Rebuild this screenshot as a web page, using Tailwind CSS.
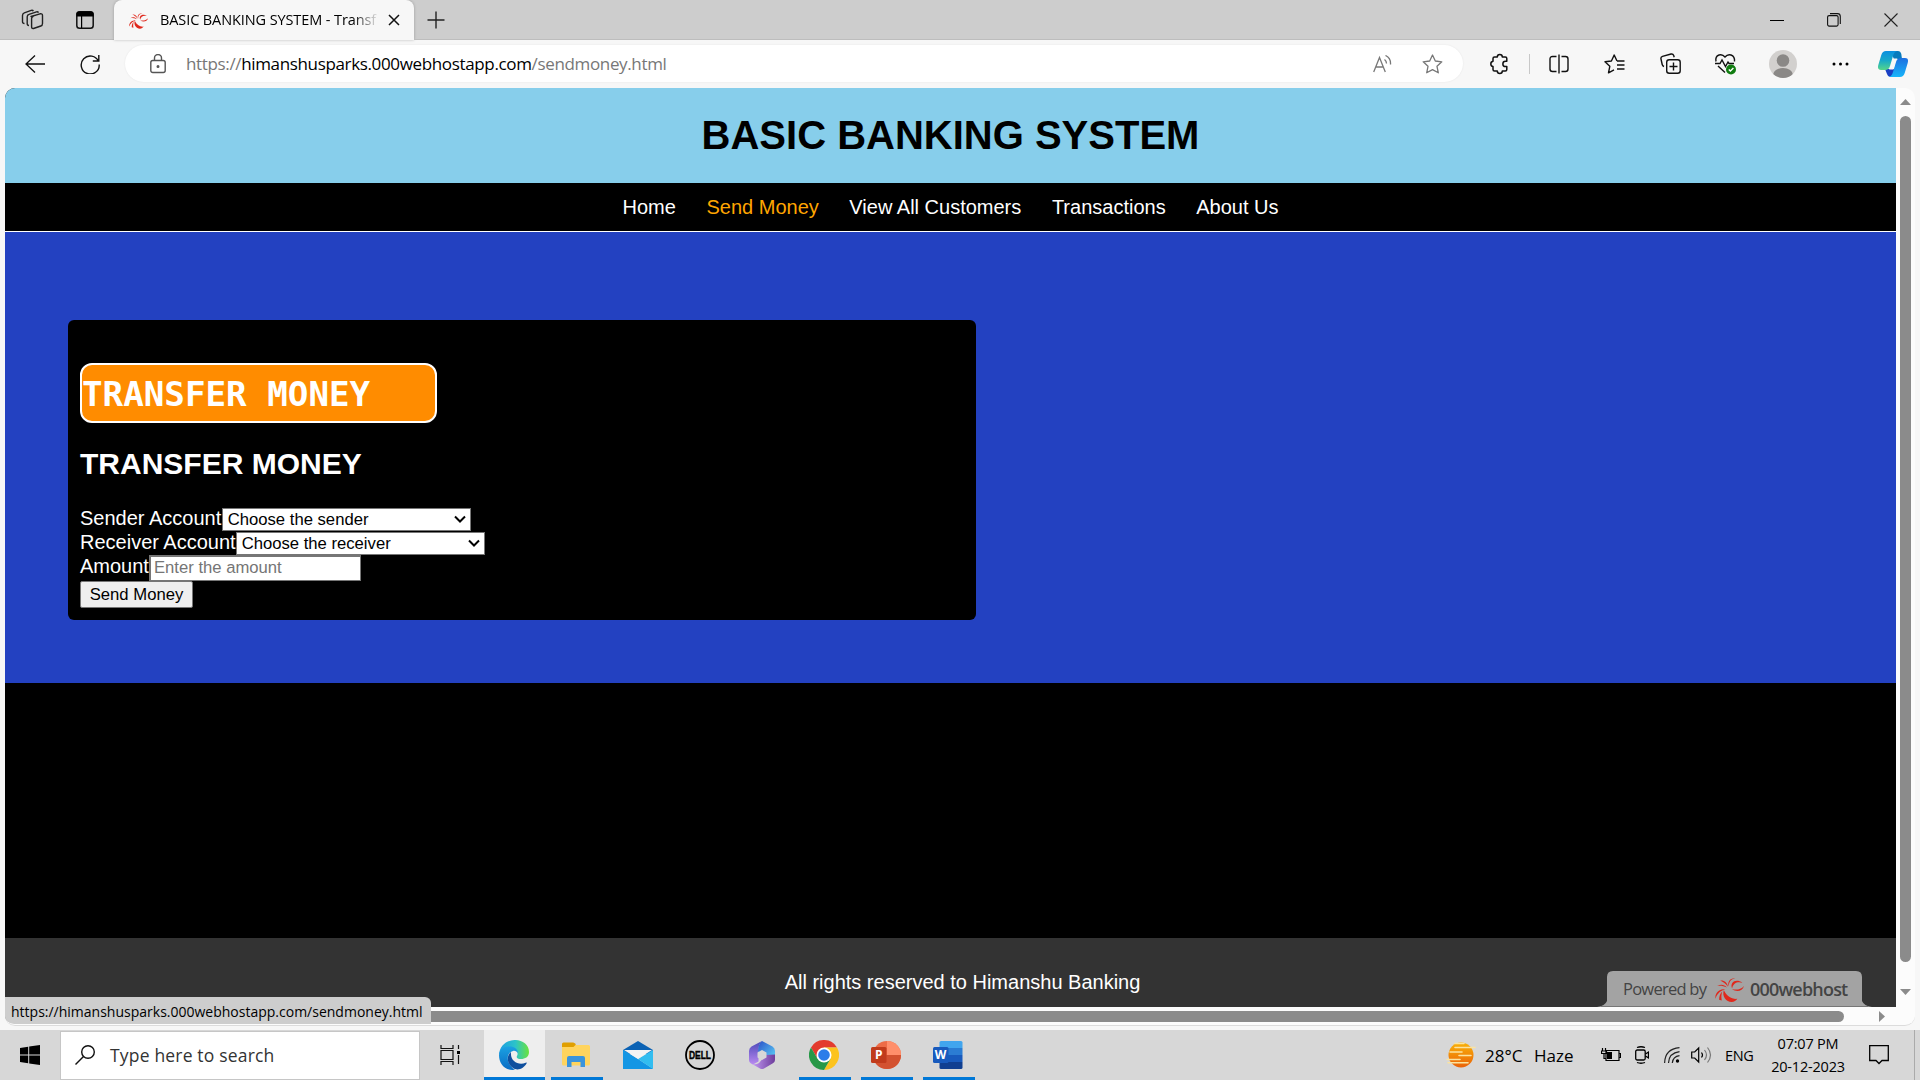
<!DOCTYPE html>
<html lang="en">
<head>
<meta charset="utf-8">
<title>BASIC BANKING SYSTEM - Transfer Money</title>
<script src="https://cdn.jsdelivr.net/npm/@tailwindcss/browser@4"></script>
</head>
<body class="w-[1920px] h-[1080px] overflow-hidden bg-[#f7f7f7] flex flex-col font-['Open_Sans',sans-serif] text-black">

<svg class="hidden">
  <symbol id="swirl" viewBox="0 0 28 24">
    <g fill="#e0281c">
      <path d="M28 8.500c-1.500 5-7 6.500-11.500 3 4 1.200 8.500.5 11.500-3z"/>
      <path d="M26.500 5.500c-4.500-1.500-9 0-10 5.500C14 5.500 20 1 26.500 5.500z"/>
      <path d="M19.500 1.200c-4 .8-6.500 3.800-6 8-2-4 1-8.500 6-8z"/>
      <path d="M5 3.300c4-.5 7 2 7.500 6C10.500 6.300 8 4.800 5 3.300z"/>
      <path d="M2 8.500c3.500-2 7-1.500 9.500 1.500-3.500-1.500-6-2-9.500-1.500z"/>
      <path d="M.5 21c-1-5.500 3.500-9.500 9.500-9.500-4 1.500-8 4-9.500 9.500z"/>
      <path d="M8.500 12.500C6.500 19 11 24 16 24c2.500 0 4.500-1.200 5.500-3C16 21.500 11 18.500 8.500 12.500z"/>
      <path d="M4 22c0-3 .8-6 3-8-1 3-1 5.500-.5 8.500z"/>
    </g>
  </symbol>
</svg>

<!-- Tab strip -->
<div class="h-10 shrink-0 bg-[#cdcdcd] flex items-stretch">
  <div class="w-[114px] flex items-center border-b border-[#bdbdbd]">
    <svg class="ml-[21px] w-[23px] h-[22px]" viewBox="0 0 23 22" fill="none" stroke="#222" stroke-width="1.4" stroke-linejoin="round"><path d="M10 7.500 19 4.800q2.500-.5 2.500 1.700v8q0 2-1.700 2.500l-7.300 2.500q-1.900.4-1.900-1.700V9.500q0-1.500 1.400-2zM8 16.500q-1.800 0-1.800-2V7.800q0-2 1.800-2.500l7.500-2.500q1.400-.4 2 .8M3.500 14.500q-2 0-2-2v-6q0-2 1.800-2.700l6.900-2.400q1.500-.4 2.200.7"/></svg>
    <svg class="ml-8 w-[18px] h-[18px]" viewBox="0 0 18 18"><rect x=".8" y=".8" width="16.400" height="16.400" rx="2.800" fill="none" stroke="#111" stroke-width="1.500"/><path d="M.5 5.500V3Q.5.500 3 .5h12q2.500 0 2.500 2.500v2.500zM5 5h1.200v12H5z"/></svg>
  </div>
  <div class="w-[300px] bg-[#f7f7f7] rounded-t-lg flex items-center shadow-[0_0_3px_rgba(0,0,0,0.25)]">
    <svg class="ml-[15px] w-[19px] h-[17px]"><use href="#swirl"/></svg>
    <div class="ml-[12px] w-[219px] text-[14.5px] tracking-[-0.1px] whitespace-nowrap mask-r-from-88% mask-r-to-100%">BASIC BANKING SYSTEM - Transf</div>
    <svg class="ml-[9px] w-[12px] h-[12px]" viewBox="0 0 12 12" stroke="#111" stroke-width="1.500"><path d="M1 1l10 10M11 1 1 11"/></svg>
  </div>
  <div class="flex-1 flex items-center border-b border-[#bdbdbd]">
    <svg class="ml-[13px] w-[18px] h-[18px]" viewBox="0 0 18 18" stroke="#222" stroke-width="1.400"><path d="M9 .5v17M.5 9h17"/></svg>
    <svg class="ml-auto w-[14px] h-[14px]" viewBox="0 0 14 14" stroke="#000"><path d="M0 7.500h14"/></svg>
    <svg class="ml-[43px] w-[14px] h-[14px]" viewBox="0 0 14 14" fill="none" stroke="#111" stroke-width="1.100"><rect x=".6" y="2.600" width="10.500" height="10.500" rx="1.500"/><path d="M3 .6h7.500q2.800 0 2.800 2.800V11"/></svg>
    <svg class="ml-[43px] mr-[22px] w-[14px] h-[14px]" viewBox="0 0 14 14" stroke="#222" stroke-width="1.100"><path d="M.5.500l13 13M13.500.500l-13 13"/></svg>
  </div>
</div>

<!-- Toolbar -->
<div class="h-12 shrink-0 flex items-center pb-px">
  <svg class="ml-[25px] w-[20px] h-[18px]" viewBox="0 0 20 18" fill="none" stroke="#111" stroke-width="1.300"><path d="M10 .5 1 9l9 8.500M1 9h19"/></svg>
  <svg class="ml-[35px] w-[20px] h-[20px]" viewBox="0 0 20 20" fill="none" stroke="#111" stroke-width="1.400"><path d="M18.500 7.500A9 9 0 1 0 19.200 10.500M18.800 1v6h-6"/></svg>
  <div class="ml-[25px] w-[1338px] h-[37px] bg-white rounded-full flex items-center shadow-[0_0_2px_rgba(0,0,0,0.08)]">
    <svg class="ml-[25px] w-[16px] h-[20px]" viewBox="0 0 16 20" fill="none" stroke="#555" stroke-width="1.400"><rect x=".8" y="6.500" width="14.400" height="12" rx="2"/><path d="M4.500 6.500V4a3.500 3.500 0 0 1 7 0v2.500"/><circle cx="8" cy="12.500" r=".8" fill="#555"/></svg>
    <div class="ml-[20px] text-[17px] tracking-[-0.35px] whitespace-nowrap text-[#777]">https://<span class="text-black">himanshusparks.000webhostapp.com</span>/sendmoney.html</div>
    <svg class="ml-auto w-[19px] h-[18px]" viewBox="0 0 19 18" fill="none" stroke="#777" stroke-width="1.300"><path d="M.7 17 6.500 2.500 12.300 17M2.800 12h7.400M11.500 4.500q2 1.500 2 4M12.500.500Q18 3 17.500 9.500"/></svg>
    <svg class="ml-[30px] mr-[20px] w-[21px] h-[20px]" viewBox="0 0 21 20" fill="none" stroke="#777" stroke-width="1.300" stroke-linejoin="round"><path d="m10.500 1 2.800 6 6.500.8-4.800 4.500 1.300 6.500-5.800-3.200-5.800 3.200L6 12.300 1.200 7.800 7.700 7z"/></svg>
  </div>
  <svg class="ml-[26px] w-[20px] h-[22px]" viewBox="0 0 20 22" fill="none" stroke="#111" stroke-width="1.500" stroke-linejoin="round"><path d="M5.500 4h2.800a2.500 2.500 0 0 1 5 0h3q1.500 0 1.500 1.500v2.800h-1.300a2.600 2.600 0 0 0 0 5.300h1.300v3q0 1.500-1.500 1.500h-3a2.500 2.500 0 0 1-5 0H5.500Q4 18.100 4 16.600v-3a2.700 2.700 0 0 1 0-5.300V5.500Q4 4 5.500 4z"/></svg>
  <div class="ml-[20px] w-px h-5 bg-[#c8c8c8]"></div>
  <svg class="ml-[19px] w-[20px] h-[20px]" viewBox="0 0 20 20" fill="none" stroke="#111" stroke-width="1.400"><path d="M7.500 2.500H3.500Q1 2.500 1 5v10q0 2.500 2.500 2.500h4M12.500 2.500h4Q19 2.500 19 5v10q0 2.500-2.500 2.500h-4M10 .5v19"/></svg>
  <svg class="ml-[35px] w-[21px] h-[20px]" viewBox="0 0 21 20" fill="none" stroke="#111" stroke-width="1.400" stroke-linejoin="round"><path d="M13 7 10.200 1 7.400 7 1 7.800l4.800 4.500-1.300 6.500L10 15.800M13 7h7.500M13 11h7.500M13 15h7.500"/></svg>
  <svg class="ml-[35px] w-[21px] h-[21px]" viewBox="0 0 21 21" fill="none" stroke="#111" stroke-width="1.400"><rect x="6.700" y="6.700" width="13.500" height="13.500" rx="2.500"/><path d="M13.500 9.500v8M9.500 13.500h8M4 13.500Q2.500 13 2.200 11.500L1 6q-.5-2 1.500-2.700L11 1q2-.4 2.700 1.500l.5 1.700"/></svg>
  <svg class="ml-[33px] w-[23px] h-[22px]" viewBox="0 0 23 22" fill="none" stroke="#111" stroke-width="1.400"><path d="M2 8.500Q1 3.500 5 2q3.500-1 6 2 2.500-3 6-2 4 1.500 3.500 6.500M1 10.500h5l2-3.500 3.500 6.500 2.500-4.500 1 1.500h5M4 13l7 6.500"/><circle cx="17" cy="16.500" r="5" fill="#107c10" stroke="none"/><path d="m14.800 16.500 1.600 1.600 3-3" stroke="#fff"/></svg>
  <svg class="ml-[32px] w-[28px] h-[28px]" viewBox="0 0 28 28"><defs><clipPath id="av"><circle cx="14" cy="14" r="14"/></clipPath></defs><g clip-path="url(#av)"><path fill="#d2d0ce" d="M0 0h28v28H0z"/><circle cx="14" cy="10.500" r="6.300" fill="#8a8886"/><ellipse cx="14" cy="25" rx="10" ry="7" fill="#8a8886"/></g></svg>
  <svg class="ml-[35px] w-[17px] h-[4px]" viewBox="0 0 17 4"><circle cx="2" cy="2" r="1.500"/><circle cx="8.500" cy="2" r="1.500"/><circle cx="15" cy="2" r="1.500"/></svg>
  <svg class="ml-[29px] w-[30px] h-[28px]" viewBox="0 0 30 28"><defs><linearGradient id="c1" x1="0" y1="0" x2="0" y2="1"><stop stop-color="#0a8fe0"/><stop offset=".5" stop-color="#18a9c9"/><stop offset="1" stop-color="#55d68a"/></linearGradient><linearGradient id="c2" x1="0" y1="0" x2="0" y2="1"><stop stop-color="#1d6fe0"/><stop offset="1" stop-color="#18b5fa"/></linearGradient></defs><path fill="#1a3fc4" d="M7 19h9l2 8h-5q-3 0-4-3z"/><path fill="#087bbd" d="M12 1h8q2.500 0 3.300 3L24 9h-8z"/><path fill="url(#c1)" d="M8 1h11q-3 1-4 5l-3 10q-1 4-5 4H3q-4 0-2.700-5l3-10Q4.500 1 8 1z"/><path fill="url(#c2)" d="M22 27H11q3-1 4-5l3-10q1-4 5-4h4q4 0 2.700 5l-3 10q-1.200 4-4.700 4z"/><path fill="#f7f7f7" d="M15.500 8.500h4q-1.500 1-2 3.500l-2.200 7.500H11q1.500-1 2.200-3.500z"/></svg>
</div>

<!-- Page viewport -->
<div class="relative ml-[5px] w-[1910px] h-[938px] shrink-0 bg-[#fcfcfc] rounded-[10px] overflow-hidden border-b border-[#dcdcdc] flex flex-col">
  <div class="h-[919px] flex">
    <div class="relative w-[1891px] bg-black flex flex-col font-['Liberation_Sans',Arial,sans-serif] text-[20px] text-white">
      <header class="h-[95px] bg-[#87ceeb] flex items-center justify-center pb-0.5">
        <h1 class="text-black text-[40px] font-bold leading-none">BASIC BANKING SYSTEM</h1>
      </header>
      <nav class="h-[49px] border-b border-white flex items-center justify-center gap-[30.6px]">
        <a>Home</a><a class="text-[#ffa500]">Send Money</a><a>View All Customers</a><a>Transactions</a><a>About Us</a>
      </nav>
      <main class="h-[451px] bg-[#2341c1] pt-[88px] pl-[63px]">
        <section class="w-[908px] h-[300px] bg-black rounded-md pl-3 pt-[43px]">
          <div class="w-[357px] h-[60px] rounded-xl border-2 border-white bg-[#ff8c00] flex items-center font-['DejaVu_Sans_Mono',monospace] font-bold text-[34.2px] leading-none whitespace-pre pt-[3px]">TRANSFER MONEY</div>
          <h2 class="mt-[26px] text-[30px] leading-[30px] font-bold">TRANSFER MONEY</h2>
          <div class="mt-[28px] h-6 flex items-center"><label class="leading-[22px] pb-0.5">Sender Account</label>
            <div class="w-[249px] h-[23px] ml-[0.5px] bg-white border border-[#767676] flex items-center justify-between pl-[5px] pr-[4px] text-black text-[16.67px]"><span class="pt-px">Choose the sender</span><svg class="w-[12px] h-[8px]" viewBox="0 0 12 8" fill="none" stroke="#000" stroke-width="2"><path d="m1 1.500 5 5 5-5"/></svg></div></div>
          <div class="h-6 flex items-center"><label class="leading-[22px] pb-0.5">Receiver Account</label>
            <div class="w-[249px] h-[23px] bg-white border border-[#767676] flex items-center justify-between pl-[5px] pr-[4px] text-black text-[16.67px]"><span class="pt-px">Choose the receiver</span><svg class="w-[12px] h-[8px]" viewBox="0 0 12 8" fill="none" stroke="#000" stroke-width="2"><path d="m1 1.500 5 5 5-5"/></svg></div></div>
          <div class="h-[26px] flex items-start"><label class="leading-[22px]">Amount</label>
            <div class="w-[212px] h-[26px] bg-white border-2 border-[#767676] border-r border-b flex items-center pl-[3px] pb-0.5 text-[#757575] text-[16.67px]">Enter the amount</div></div>
          <div class="w-[113px] h-[27px] bg-[#efefef] border border-[#767676] rounded-xs flex items-center justify-center text-black text-[16.67px]">Send Money</div>
        </section>
      </main>
      <div class="h-[255px]"></div>
      <footer class="flex-1 bg-[#333] pt-[33px] pl-[24px] text-center leading-[23px]">All rights reserved to Himanshu Banking</footer>
      <div class="absolute right-[24px] bottom-0 w-[275px] h-[36px] flex items-center text-[#444] font-['Open_Sans',sans-serif]">
        <svg class="absolute inset-0 w-[275px] h-[36px]" viewBox="0 0 275 36"><path fill="#a3a3a3" d="M0 36q8-1 10-6V6q0-6 6-6h243q6 0 6 6v24q2 5 10 6z"/><path fill="#777" d="M4 35h267v1H4z"/></svg>
        <span class="relative ml-[26px] w-[84px] text-[16.5px] tracking-[-0.75px] whitespace-nowrap">Powered by</span>
        <svg class="relative ml-[8px] w-[29px] h-[25px]"><use href="#swirl"/></svg>
        <span class="relative ml-[6px] text-[18px] tracking-[-0.8px] font-semibold">000webhost</span>
      </div>
    </div>
    <div class="flex-1 flex flex-col items-center">
      <svg class="mt-[11px] w-[11px] h-[6px]" viewBox="0 0 11 6"><path fill="#8b8b8b" d="M5.500 0 11 6H0z"/></svg>
      <div class="mt-[11px] w-[11px] h-[846px] rounded-full bg-[#8b8b8b]"></div>
      <svg class="mt-[27px] w-[11px] h-[6px]" viewBox="0 0 11 6"><path fill="#8b8b8b" d="M5.500 6 11 0H0z"/></svg>
    </div>
  </div>
  <div class="flex-1 flex items-center">
    <div class="w-[1839px] h-[11px] bg-[#8b8b8b] rounded-full"></div>
    <svg class="ml-[35px] w-[6px] h-[11px]" viewBox="0 0 6 11"><path fill="#8b8b8b" d="M6 5.500 0 11V0z"/></svg>
  </div>
  <div class="absolute -left-px bottom-[1px] w-[427px] h-[27px] bg-[#cdcdcd] rounded-tr-md rounded-bl-[10px] flex items-center pt-px pl-[7px] text-[14px] whitespace-nowrap">https://himanshusparks.000webhostapp.com/sendmoney.html</div>
</div>
<div class="h-[4px] shrink-0"></div>

<!-- Taskbar -->
<div class="h-[50px] shrink-0 bg-[#d7d7d7] flex items-center">
  <svg class="ml-5 w-5 h-5" viewBox="0 0 20 20"><path d="M0 3l8.200-1.200v7.700H0zM9.200 1.600 20 0v9.500H9.200zM0 10.500h8.200v7.700L0 17zM9.200 10.500H20V20L9.200 18.400z"/></svg>
  <div class="ml-[20px] w-[360px] h-[49px] bg-white border border-[#c6c6c6] flex items-center">
    <svg class="ml-[14px] w-[20px] h-[20px]" viewBox="0 0 20 20" fill="none" stroke="#111" stroke-width="1.400"><circle cx="13" cy="7" r="6.300"/><path d="M8.500 11.500.5 19.500"/></svg>
    <span class="ml-[15px] text-[17.5px] tracking-[0.18px] text-[#333]">Type here to search</span>
  </div>
  <div class="w-[64px] flex justify-center pr-[3px]">
    <svg class="w-[21px] h-[20px]" viewBox="0 0 21 20" fill="none" stroke="#111" stroke-width="1.200"><path d="M1 0v3.500h12V0M1 5.500h12v9H1zM1 20v-3.500h12V20M18.500 0v4M18.500 10v9"/><path fill="#000" stroke="none" d="M17 6h3v3h-3z"/></svg>
  </div>
  <div class="grid grid-cols-[repeat(8,62px)] h-full">
    <div class="w-[61px] bg-[#eee] border-b-[3px] border-[#0078d7] flex items-center justify-center pt-[3px] pr-px">
      <svg class="w-[30px] h-[30px]" viewBox="0 0 30 30"><defs><linearGradient id="e1"><stop stop-color="#1b9de2"/><stop offset=".55" stop-color="#2cc3c9"/><stop offset="1" stop-color="#6be33c"/></linearGradient><linearGradient id="e2" x1="0" y1="0" x2="0" y2="1"><stop stop-color="#1ba1e2"/><stop offset="1" stop-color="#0a6cc4"/></linearGradient></defs><path fill="url(#e1)" d="M0 15C1-5 30-4 30 12c0 5-4 7-8 7-3.500 0-5-1.500-4-3 2-4-1-7-6-7-6 0-10 2-12 6z"/><path fill="url(#e2)" d="M0 15C1 8 6 6.500 11 6.500c4 0 8 2.500 8 7-1-2-3-3-5-2.500-4 1-6 5-5 9.500 1 4 4 7.500 7 9.300C5 31 0 23 0 15z"/><path fill="#0f4f9e" d="M12 12c-5 4-4 12 2 16 5 3.500 11 0 13.500-4.500.5-.8 0-1.200-.8-.8C20 25.500 11 22 12 12z"/></svg>
    </div>
    <div class="mx-[5px] border-b-[3px] border-[#0078d7] flex items-center justify-center pt-[3px] pr-[2px]">
      <svg class="w-[28px] h-[26px]" viewBox="0 0 28 26"><path fill="#e09f00" d="M0 2q0-1.500 1.500-1.500H11q1 0 1.700.8L14 3v4H0z"/><path fill="#ffd45e" d="M0 5h11.500l2-2H26.500Q28 3 28 4.500V22q0 1.500-1.500 1.500h-25Q0 23.500 0 22z"/><path fill="#3a94dc" d="M5 25V16q0-2 2-2h14q2 0 2 2v9h-4.500v-5h-9v5z"/></svg>
    </div>
    <div class="flex items-center justify-center pr-[2px]"><svg class="w-[30px] h-[28px]" viewBox="0 0 30 28"><path fill="#0b62b4" d="M0 9 15 0l15 9v4H0z"/><path fill="#1496e4" d="M0 9v19h30z"/><path fill="#1496e4" d="M0 9v19h30L15 18z"/><path fill="#32bdf0" d="M30 9v19L15 18z"/><path fill="#f4f4f4" d="M1 9h28L15 18z"/></svg></div>
    <div class="flex items-center justify-center pr-[2px]"><svg class="w-[30px] h-[30px]" viewBox="0 0 30 30"><circle cx="15" cy="15" r="14" fill="none" stroke="#000" stroke-width="1.800"/><text x="4" y="18.800" font-family="Liberation Sans" font-weight="bold" font-size="10.500" textLength="22" lengthAdjust="spacingAndGlyphs" stroke="#000" stroke-width=".4">DELL</text></svg></div>
    <div class="flex items-center justify-center pr-[2px]"><svg class="w-[26px] h-[28px]" viewBox="0 0 26 28"><defs><linearGradient id="m1" x1="0" y1="0" x2="0" y2="1"><stop stop-color="#4a47b8"/><stop offset="1" stop-color="#b98af0"/></linearGradient><linearGradient id="m2" x1="0" y1="0" x2="1" y2="1"><stop stop-color="#2b52c8"/><stop offset="1" stop-color="#5fd5fa"/></linearGradient><linearGradient id="m3"><stop stop-color="#c49af5"/><stop offset="1" stop-color="#6d3d9c"/></linearGradient></defs><path fill="url(#m1)" d="M13 0 2.500 5.500Q0 7 0 10v9q0 2.500 2 3.500l2 1 5.500-3V9q0-6 3.500-9z"/><path fill="url(#m2)" d="m13 0 10.500 5.500Q26 7 26 10v8.500L17 14l-8-3.500Q9 3 13 0z"/><path fill="url(#m3)" d="M17 14l9-.5V19q0 2.500-2.500 3.500L15 27.500q-2 1-4 0l-8-4.500q4 1 7-1z"/><path fill="#d7d7d7" d="m13 9 4.500 2.500v5L13 19l-4.500-2.500v-5z"/></svg></div>
    <div class="mx-[5px] border-b-[3px] border-[#0078d7] flex items-center justify-center pt-[3px] pr-[2px]">
      <svg class="w-[30px] h-[30px]" viewBox="0 0 30 30"><path fill="#e33b2e" d="M2 7.500a15 15 0 0 1 26 0H15v7.500L8.500 18.800z"/><path fill="#fcc31e" d="M28 7.500A15 15 0 0 1 15 30l6.500-11.200L15 7.500z"/><path fill="#279847" d="M2 7.500A15 15 0 0 0 15 30l6.500-11.200L15 15l-6.500 3.800z"/><circle cx="15" cy="15" r="7.500" fill="#fff"/><circle cx="15" cy="15" r="5.800" fill="#2b7de9"/></svg>
    </div>
    <div class="mx-[5px] border-b-[3px] border-[#0078d7] flex items-center justify-center pt-[3px] pr-[2px]">
      <svg class="w-[30px] h-[28px]" viewBox="0 0 30 28"><circle cx="16" cy="14" r="14" fill="#ed6c47"/><path fill="#ff8f6b" d="M16 0a14 14 0 0 1 14 14H16z"/><path fill="#d35230" d="M2 14h28a14 14 0 0 1-28 0z"/><rect y="6" width="15.500" height="16" rx="1.500" fill="#c13b1b"/><text x="4" y="18.300" font-family="Open Sans" font-weight="bold" font-size="12" fill="#fff">P</text></svg>
    </div>
    <div class="mx-[5px] border-b-[3px] border-[#0078d7] flex items-center justify-center pt-[3px] pr-[2px]">
      <svg class="w-[30px] h-[28px]" viewBox="0 0 30 28"><path fill="#41a5ee" d="M8 0h20q1.500 0 1.500 1.500V7h-23V1.500Q6.500 0 8 0z"/><path fill="#2b7cd3" d="M6.500 7h23v7h-23z"/><path fill="#185abd" d="M6.500 14h23v7h-23z"/><path fill="#103f91" d="M6.500 21h23v5.500q0 1.500-1.500 1.500H8q-1.500 0-1.500-1.500z"/><rect y="6" width="15.500" height="16" rx="1.500" fill="#185abd"/><text x="1.800" y="18.300" font-family="Open Sans" font-weight="bold" font-size="12" fill="#fff">W</text></svg>
    </div>
  </div>
  <div class="ml-auto flex items-center">
    <svg class="w-[30px] h-[26px]" viewBox="0 0 30 26"><defs><linearGradient id="s" x1="0" y1="0" x2="0" y2="1"><stop stop-color="#f9b208"/><stop offset="1" stop-color="#ea6208"/></linearGradient></defs><circle cx="15" cy="13" r="12.500" fill="url(#s)"/><path d="M9 1.500h9M9 5.500h20M4 10h12M13 13.500h12M1 17.500h13M2 20.800h20" stroke="#fbe3a0" stroke-width="1.600" stroke-linecap="round"/></svg>
    <span class="ml-[9px] w-[49px] pt-px text-[17px]">28°C</span>
    <span class="w-[67px] pt-px text-[17px]">Haze</span>
    <svg class="w-[20px] h-[14px]" viewBox="0 0 20 14" fill="none" stroke="#000" stroke-width="1.200"><path d="M5 2.500h13v10H5zM18.500 5.500h1v4h-1M1.500 0v2.500M4.500 0v2.500M.5 3h5v2.500h-5zM3 5v5.500h2"/><path d="M6 4h5v7H6z" fill="#000" stroke="none"/></svg>
    <svg class="ml-[14px] w-[14px] h-[18px]" viewBox="0 0 14 18" fill="none" stroke="#000" stroke-width="1.300"><rect x=".7" y="4" width="9.500" height="10" rx="1.500"/><path d="m10.500 8 3-2v6l-3-2M2 1.500q4-1.500 8 0M2 16.500q4 1.500 8 0"/></svg>
    <svg class="ml-[15px] w-[16px] h-[16px]" viewBox="0 0 16 16" fill="none" stroke="#222" stroke-width="1.200"><path d="M.6 16Q1 2 15.500.7M4.500 16Q5 6 15.500 4.700M8.300 16Q9 9.500 15.500 8.700"/><circle cx="13.500" cy="14" r="1.700" fill="#000" stroke="none"/></svg>
    <svg class="ml-[11px] w-[21px] h-[18px]" viewBox="0 0 21 18" fill="none" stroke="#000" stroke-width="1.200"><path d="M.7 6h3l4-4v14l-4-4h-3zM10.500 6.500q2 2.500 0 5"/><path stroke="#777" d="M13.500 4q4 5 0 10M16.500 1.500q6 7.500 0 15"/></svg>
    <span class="ml-[13px] w-[28px] pt-px text-[14.5px] tracking-[-0.4px]">ENG</span>
    <div class="ml-[11px] w-[88px] text-center text-[14.5px] leading-[23px] tracking-[-0.2px] pb-px">07:07 PM<br>20-12-2023</div>
    <svg class="ml-[17px] w-[20px] h-[20px]" viewBox="0 0 20 20" fill="none" stroke="#000" stroke-width="1.300"><path d="M.7.700h18.600v14.800H13L10 18.500 7 15.500H.7z"/></svg>
    <div class="ml-[25px] mr-[5px] w-px h-[50px] bg-[#aaa]"></div>
  </div>
</div>
</body>
</html>
